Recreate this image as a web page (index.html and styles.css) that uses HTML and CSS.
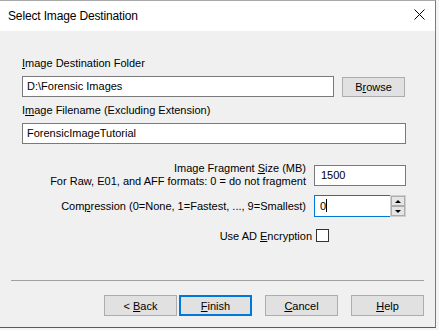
FILE: index.html
```html
<!DOCTYPE html>
<html lang="en">
<head>
    <meta charset="UTF-8">
    <meta name="viewport" content="width=device-width, initial-scale=1.0">
    <title>Select Image Destination</title>
    <link rel="stylesheet" href="styles.css">
</head>
<body>

    <div class="window">
        <div class="titlebar">
            <span class="title">Select Image Destination</span>
            <svg class="close" width="11" height="11" viewBox="0 0 11 11">
                <path d="M0.5 0.5 L10.5 10.5 M10.5 0.5 L0.5 10.5" stroke="#000" stroke-width="1" fill="none"/>
            </svg>
        </div>

        <div class="content">
            <label class="label first"><u>I</u>mage Destination Folder</label>
            <div class="folder-row">
                <div class="input folder">D:\Forensic Images</div>
                <button class="btn browse">B<u>r</u>owse</button>
            </div>

            <label class="label">I<u>m</u>age Filename (Excluding Extension)</label>
            <div class="input">ForensicImageTutorial</div>

            <div class="options">
                <div class="opt-label two-line">
                    <span>Image Fragment <u>S</u>ize (MB)</span>
                    <span>For Raw, E01, and AFF formats: 0 = do not fragment</span>
                </div>
                <div class="input small">1500</div>

                <div class="opt-label">Com<u>p</u>ression (0=None, 1=Fastest, ..., 9=Smallest)</div>
                <div class="spin">
                    <div class="input focused">0<span class="caret"></span></div>
                    <div class="spin-btns">
                        <div class="spin-btn"><span class="tri up"></span></div>
                        <div class="spin-btn"><span class="tri down"></span></div>
                    </div>
                </div>
            </div>

            <div class="encrypt-row">
                <span>Use AD <u>E</u>ncryption</span>
                <span class="checkbox"></span>
            </div>
        </div>

        <div class="footer">
            <div class="separator"></div>
            <div class="buttons">
                <button class="btn">&lt; <u>B</u>ack</button>
                <button class="btn default"><u>F</u>inish</button>
                <button class="btn spaced"><u>C</u>ancel</button>
                <button class="btn spaced"><u>H</u>elp</button>
            </div>
        </div>
    </div>

</body>
</html>
```

FILE: styles.css
```css
body {
    margin: 0;
    background-color: #f4f4f4;
    font-family: "Liberation Sans", Arial, sans-serif;
    font-size: 11px;
    color: #000;
}
.window {
    width: 435px;
    height: 326px;
    background-color: #f0f0f0;
    border-top: 1px solid #a8a8a8;
    border-right: 1px solid #7a7a7a;
    border-bottom: 1px solid #5a5a5a;
    display: flex;
    flex-direction: column;
}
.titlebar {
    height: 30px;
    background-color: #fff;
    display: flex;
    align-items: center;
    justify-content: space-between;
    padding: 0 10px 0 8px;
}
.title {
    font-size: 12px;
    letter-spacing: -0.15px;
    padding-bottom: 1px;
}
.close {
    margin-bottom: 3px;
}
.content {
    padding: 26px 29px 0 22px;
    display: flex;
    flex-direction: column;
}
.label {
    display: block;
    line-height: 13px;
    margin-top: 7px;
    margin-bottom: 6px;
}
.label.first {
    margin-top: 0;
}
.input {
    height: 19px;
    line-height: 19px;
    background-color: #fff;
    border: 1px solid #7a7a7a;
    padding-left: 4px;
}
.folder-row {
    display: flex;
    align-items: center;
}
.folder {
    width: 306px;
}
.btn {
    font-family: "Liberation Sans", Arial, sans-serif;
    font-size: 11px;
    color: #000;
    background-color: #e1e1e1;
    border: 1px solid #adadad;
    width: 73px;
    height: 21px;
    padding: 0;
}
.browse {
    width: 63px;
    height: 20px;
    margin-left: 8px;
    margin-top: 1px;
}
.options {
    display: grid;
    grid-template-columns: 1fr 92px;
    column-gap: 8px;
    row-gap: 7px;
    align-items: center;
    margin-top: 19px;
}
.opt-label {
    text-align: right;
    line-height: 13px;
}
.two-line {
    display: flex;
    flex-direction: column;
    margin-top: -1px;
}
.small {
    padding-left: 6px;
}
.spin {
    display: flex;
    height: 22px;
}
.spin .input {
    flex: 1;
    height: 20px;
    line-height: 20px;
    padding-left: 5px;
}
.focused {
    border-color: #0078d7;
    border-right: none;
}
.caret {
    display: inline-block;
    width: 1px;
    height: 13px;
    background-color: #000;
    vertical-align: -2px;
}
.spin-btns {
    width: 16px;
    display: flex;
    flex-direction: column;
    border: 1px solid #cfcfcf;
    box-sizing: border-box;
}
.spin-btn {
    flex: 1;
    background-color: #e5e5e5;
    border: 1px solid #adadad;
    display: flex;
    align-items: center;
    justify-content: center;
}
.tri {
    width: 0;
    height: 0;
    border-left: 3px solid transparent;
    border-right: 3px solid transparent;
}
.tri.up {
    border-bottom: 3px solid #000;
}
.tri.down {
    border-top: 3px solid #000;
}
.encrypt-row {
    display: flex;
    justify-content: flex-end;
    align-items: center;
    gap: 4px;
    padding-right: 77px;
    margin-top: 12px;
}
.checkbox {
    width: 11px;
    height: 11px;
    border: 1px solid #333;
    background-color: #fff;
}
.footer {
    margin-top: auto;
    padding: 0 11px 11px 11px;
}
.separator {
    height: 1px;
    background-color: #a0a0a0;
    margin-bottom: 14px;
}
.buttons {
    display: flex;
    justify-content: flex-end;
    gap: 2px;
}
.buttons .spaced {
    margin-left: 11px;
}
.default {
    border: 2px solid #0078d7;
}
```
